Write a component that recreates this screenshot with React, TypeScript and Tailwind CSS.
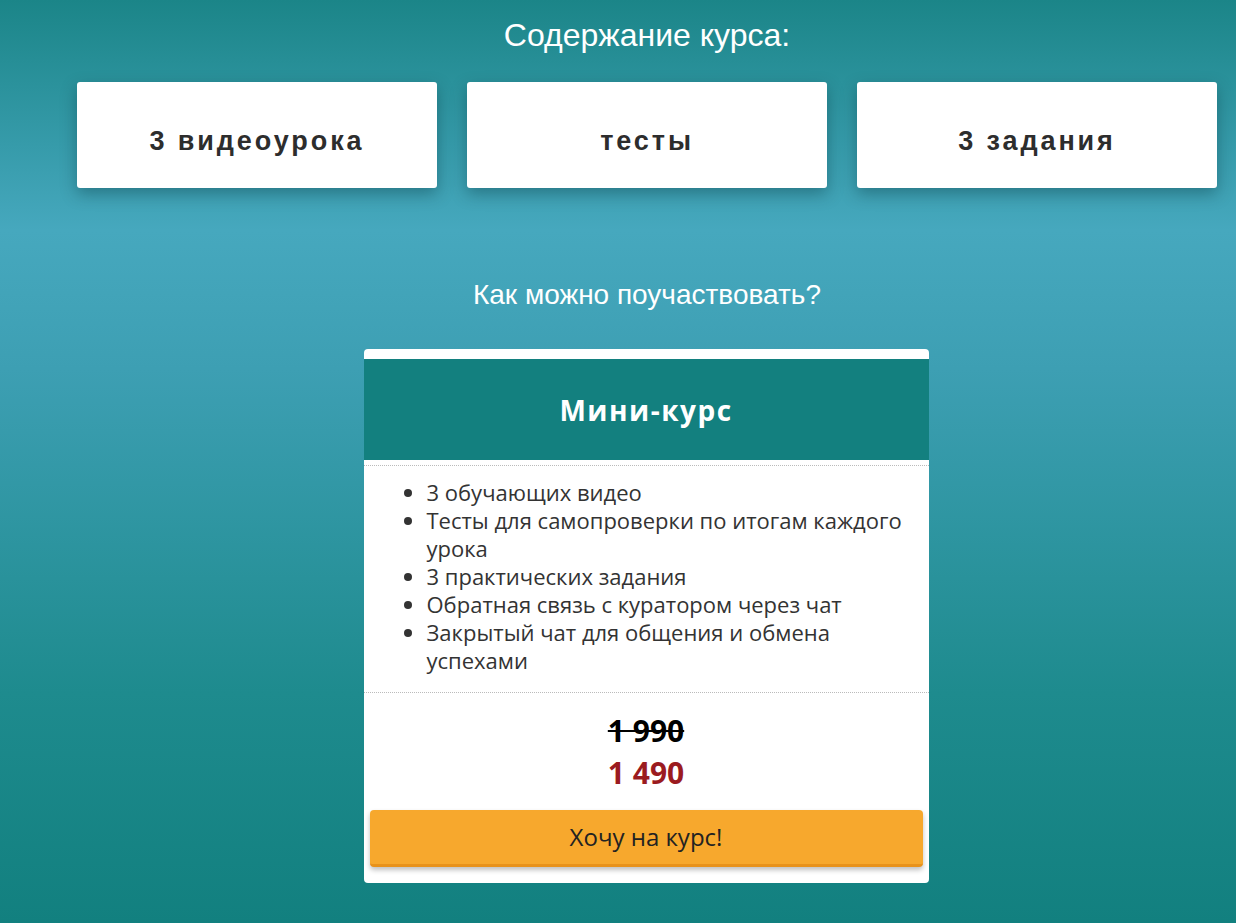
export default function App() {
  const items = [
    "3 обучающих видео",
    "Тесты для самопроверки по итогам каждого урока",
    "3 практических задания",
    "Обратная связь с куратором через чат",
    "Закрытый чат для общения и обмена успехами",
  ];
  return (
    <div className="w-[1236px] h-[923px] overflow-hidden bg-[linear-gradient(180deg,#1b8588_0%,#46a8be_25%,#3d9fb3_40%,#1e8b8e_75%,#12807f_100%)]">
      <div className="ml-[77px] w-[1140px] flex flex-col items-center">
        <h2 className="mt-[16px] h-[38px] leading-[38px] text-[32px] text-white font-['Liberation_Sans',Arial,sans-serif]">
          Содержание курса:
        </h2>
        <div className="mt-[28px] w-full grid grid-cols-3 gap-[30px]">
          {["3 видеоурока", "тесты", "3 задания"].map((t) => (
            <div
              key={t}
              className="h-[106px] pt-[12px] bg-white rounded-[3px] shadow-[0_6px_16px_rgba(0,40,50,0.35)] flex items-center justify-center text-[27px] font-bold tracking-[2.9px] text-[#2d2d2d] font-['Liberation_Sans',Arial,sans-serif]"
            >
              {t}
            </div>
          ))}
        </div>
        <h3 className="mt-[90px] h-[34px] leading-[34px] text-[28px] text-white font-['Liberation_Sans',Arial,sans-serif]">
          Как можно поучаствовать?
        </h3>
        <div className="mt-[37px] mr-[2px] w-[565px] bg-white rounded-[4px] pt-[10px] pb-[16px] font-['Open_Sans',sans-serif]">
          <div className="h-[101px] bg-[#13807f] flex items-center justify-center text-white text-[28px] font-bold tracking-[1.5px]">
            Мини-курс
          </div>
          <div className="mt-[5px] border-t border-dotted border-[#bbbbbb]" />
          <ul className="list-disc pl-[63px] pr-[20px] pt-[12px] pb-[18px] text-[22px] leading-[28px] text-[#333333]">
            {items.map((i) => (
              <li key={i}>{i}</li>
            ))}
          </ul>
          <div className="border-t border-dotted border-[#bbbbbb]" />
          <div className="pt-[18px] flex flex-col items-center">
            <div className="text-[30px] leading-[40px] font-bold text-black line-through decoration-2">1 990</div>
            <div className="mt-[2px] text-[30px] leading-[40px] font-bold text-[#9b1b1f]">1 490</div>
          </div>
          <div className="mt-[17px] mx-[6px] h-[57px] rounded-[4px] bg-[#f7a82d] border-b-[3px] border-[#e8921b] shadow-[0_3px_5px_rgba(0,0,0,0.25)] flex items-center justify-center text-[24px] text-[#222222]">
            Хочу на курс!
          </div>
        </div>
      </div>
    </div>
  );
}
